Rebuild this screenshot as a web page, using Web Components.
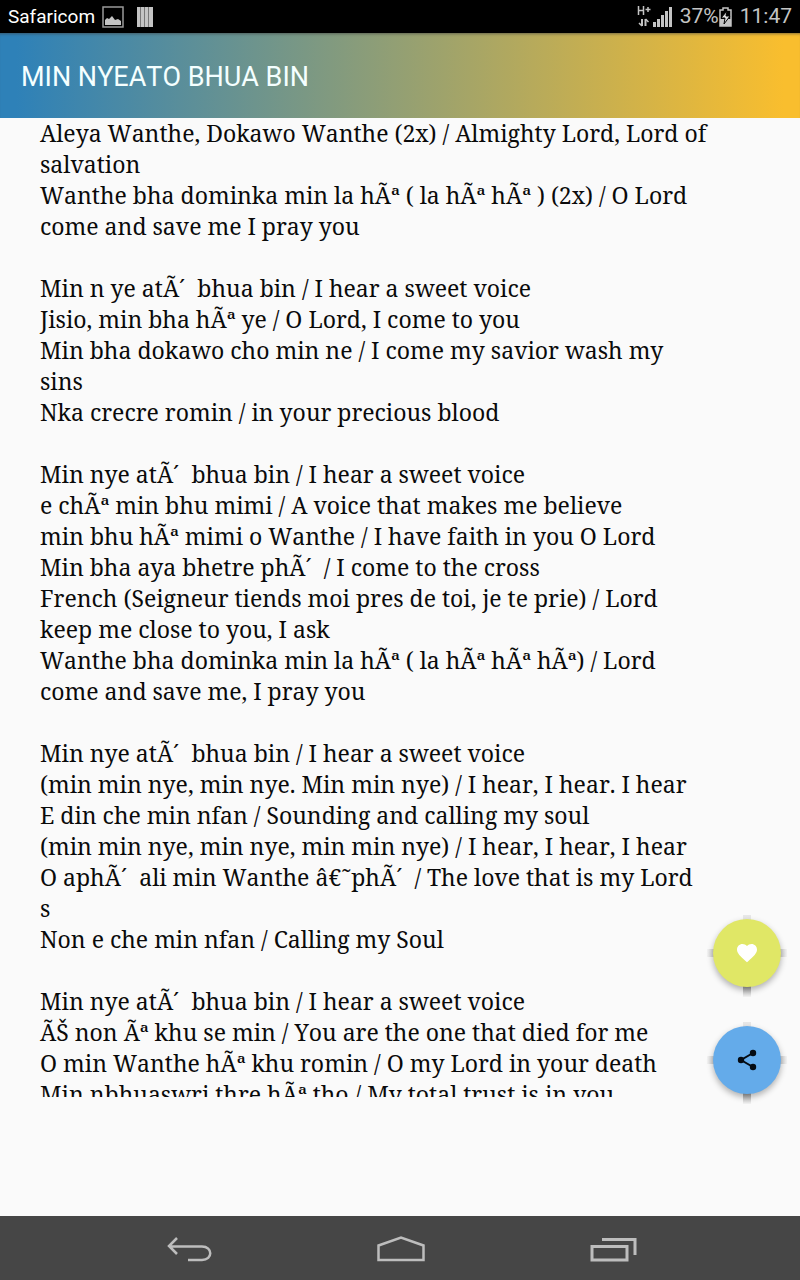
<!DOCTYPE html>
<html lang="en">
<head>
<meta charset="utf-8">
<meta name="viewport" content="width=device-width, initial-scale=1">
<title>Min Nyeato Bhua Bin</title>
<style>
    html, body {
        height: 100%;
        margin: 0;
    }
    body {
        font-family: Roboto, sans-serif;
        background: #fafafa;
        color: #0a0a0a;
    }
</style>
</head>
<body>
<song-page>
    <status-bar slot="status" carrier="Safaricom" battery="37%" time="11:47"></status-bar>
    <app-header slot="header">MIN NYEATO BHUA BIN</app-header>
    <song-lyrics slot="content">Aleya Wanthe, Dokawo Wanthe (2x) / Almighty Lord, Lord of salvation
Wanthe bha dominka min la hÃª ( la hÃª hÃª ) (2x) / O Lord come and save me I pray you

Min n ye atÃ´&nbsp; bhua bin / I hear a sweet voice
Jisio, min bha hÃª ye / O Lord, I come to you
Min bha dokawo cho min ne / I come my savior wash my sins
Nka crecre romin / in your precious blood

Min nye atÃ´&nbsp; bhua bin / I hear a sweet voice
e chÃª min bhu mimi / A voice that makes me believe
min bhu hÃª mimi o Wanthe / I have faith in you O Lord
Min bha aya bhetre phÃ´&nbsp; / I come to the cross
French (Seigneur tiends moi pres de toi, je te prie) / Lord keep me close to you, I ask
Wanthe bha dominka min la hÃª ( la hÃª hÃª hÃª) / Lord come and save me, I pray you

Min nye atÃ´&nbsp; bhua bin / I hear a sweet voice
(min min nye, min nye. Min min nye) / I hear, I hear. I hear
E din che min nfan / Sounding and calling my soul
(min min nye, min nye, min min nye) / I hear, I hear, I hear
O aphÃ´&nbsp; ali min Wanthe â€˜phÃ´&nbsp; / The love that is my Lord
s
Non e che min nfan / Calling my Soul

Min nye atÃ´&nbsp; bhua bin / I hear a sweet voice
ÃŠ non Ãª khu se min / You are the one that died for me
O min Wanthe hÃª khu romin / O my Lord in your death
Min nbhuaswri thre hÃª tho / My total trust is in you</song-lyrics>
    <round-button slot="actions" label="Favourite" style="--fill: #e0e766; --ink: #fff">
        <svg viewBox="0 0 24 24" width="24" height="24" fill="currentColor"><path d="M12 21.35l-1.45-1.32C5.4 15.36 2 12.28 2 8.5 2 5.42 4.42 3 7.5 3c1.74 0 3.41.81 4.5 2.09C13.09 3.81 14.76 3 16.5 3 19.58 3 22 5.42 22 8.5c0 3.78-3.4 6.86-8.55 11.54L12 21.35z"/></svg>
    </round-button>
    <round-button slot="actions" label="Share" style="--fill: #64abea; --ink: #050b12">
        <svg viewBox="0 0 24 24" width="24" height="24" fill="currentColor" stroke="currentColor"><path d="M18 5L6 12l12 7" fill="none" stroke-width="2"/><g stroke="none"><circle cx="18" cy="5" r="3.200"/><circle cx="6" cy="12" r="3.200"/><circle cx="18" cy="19" r="3.200"/></g></svg>
    </round-button>
    <nav-bar slot="nav"></nav-bar>
</song-page>

<script>
class SongPage extends HTMLElement {
    constructor() {
        super();
        this._shadowRoot = this.attachShadow({ mode: 'open' });
        this._shadowRoot.innerHTML = `
            <style>
                :host {
                    display: flex;
                    flex-direction: column;
                    height: 100vh;
                }
                main {
                    position: relative;
                    display: flex;
                    flex: 1;
                    min-height: 0;
                    padding-bottom: 119px;
                }
                .actions {
                    position: absolute;
                    right: 19px;
                    bottom: 122px;
                    display: flex;
                    flex-direction: column;
                    gap: 39px;
                }
            </style>
            <slot name="status"></slot>
            <slot name="header"></slot>
            <main>
                <slot name="content"></slot>
                <div class="actions"><slot name="actions"></slot></div>
            </main>
            <slot name="nav"></slot>
        `;
    }
}

class StatusBar extends HTMLElement {
    constructor() {
        super();
        this._shadowRoot = this.attachShadow({ mode: 'open' });
    }

    connectedCallback() {
        this._shadowRoot.innerHTML = `
            <style>
                :host {
                    display: flex;
                    justify-content: space-between;
                    flex: none;
                    height: 33px;
                    padding: 0 8px;
                    background: #000;
                    color: #c4c4c4;
                    font-size: 21px;
                    line-height: 33px;
                }
                div {
                    display: flex;
                    align-items: center;
                }
                .carrier {
                    margin-right: 7px;
                    color: #fff;
                    font-size: 19px;
                }
                .stripes { margin-left: 13px; }
                .signal { margin: 0 8px 0 2px; }
                .time { margin-left: 8px; }
                svg { flex: none; }
            </style>
            <div>
                <span class="carrier">${this.getAttribute('carrier')}</span>
                <svg width="22" height="22" viewBox="0 0 22 22"><path d="M1 1h20v20H1z" fill="none" stroke="#999" stroke-width="1.5"/><path d="M3 19v-5l2-2 2 1 3-3 3 4 3-1 3 2v4z" fill="#c4c4c4"/></svg>
                <svg class="stripes" width="16" height="20" viewBox="0 0 16 20"><path d="M0 0h16v20H0z" fill="#777"/><path d="M0 0h3v20H0zM4 0h3v20H4zM8 0h3v20H8zM12 0h4v20h-4z" fill="#c4c4c4"/></svg>
            </div>
            <div>
                <svg width="14" height="24" viewBox="0 0 14 24" fill="none" stroke="#c4c4c4"><path d="M1.500 1v9M6.500 1v9M1.500 5.500h5M8.500 4.500h5M11 2v5" stroke-width="1.500"/><path d="M5 21v-7M8.500 14v7" stroke-width="2"/><path d="M2 18l3 3M8.500 14l3 3" stroke-width="1.500"/></svg>
                <svg class="signal" width="19" height="20" viewBox="0 0 19 20" fill="#c4c4c4"><path d="M0 15h3v5H0zM4 12h3v8H4zM8 8h3v12H8zM12 4h3v16h-3zM16 0h3v20h-3z"/></svg>
                <span>${this.getAttribute('battery')}</span>
                <svg width="13" height="20" viewBox="0 0 13 20"><path d="M4 1h5v2h3v16H1V3h3z" fill="none" stroke="#c4c4c4" stroke-width="1.500"/><path d="M1 12h11v7H1z" fill="#c4c4c4"/><path d="M8 4L2 11h4l-1 6 6-8H7z" fill="#ddd" stroke="#000"/></svg>
                <span class="time">${this.getAttribute('time')}</span>
            </div>
        `;
    }
}

class AppHeader extends HTMLElement {
    constructor() {
        super();
        this._shadowRoot = this.attachShadow({ mode: 'open' });
        this._shadowRoot.innerHTML = `
            <style>
                :host {
                    display: flex;
                    align-items: center;
                    flex: none;
                    height: 85px;
                    padding: 2px 21px 0;
                    box-sizing: border-box;
                    background: linear-gradient(to right, #2e81b8 2%, #f9be2e 98%);
                    box-shadow: inset 0 3px 3px -2px rgba(60, 60, 60, .6);
                    color: #f4ffff;
                }
                h1 {
                    margin: 0;
                    font-size: 27px;
                    font-weight: 400;
                    line-height: 32px;
                    font-kerning: none;
                }
            </style>
            <h1><slot></slot></h1>
        `;
    }
}

class SongLyrics extends HTMLElement {
    constructor() {
        super();
        this._shadowRoot = this.attachShadow({ mode: 'open' });
        this._shadowRoot.innerHTML = `
            <style>
                :host {
                    display: block;
                    flex: 1;
                    overflow: hidden;
                    padding: 0 92px 0 40px;
                    font-family: "Noto Serif", "Droid Serif", "DejaVu Serif Condensed", "DejaVu Serif", serif;
                    font-size: 23px;
                    line-height: 31px;
                    font-kerning: none;
                }
                slot {
                    display: block;
                    white-space: pre-line;
                }
            </style>
            <slot></slot>
        `;
    }
}

class RoundButton extends HTMLElement {
    constructor() {
        super();
        this._shadowRoot = this.attachShadow({ mode: 'open' });
    }

    connectedCallback() {
        this._shadowRoot.innerHTML = `
            <style>
                :host {
                    display: block;
                    position: relative;
                    width: 68px;
                    height: 68px;
                }
                /* edges of the drop shadow that show past the circle */
                :host::before, :host::after {
                    content: "";
                    position: absolute;
                }
                :host::before {
                    left: 30px;
                    top: -4px;
                    width: 8px;
                    height: 82px;
                    background: linear-gradient(#e8e8e8, #ddd 50%, #999 86%, #f4f4f4);
                }
                :host::after {
                    left: -6px;
                    top: 30px;
                    width: 80px;
                    height: 8px;
                    background: linear-gradient(to right, #f4f4f4, #d0d0d0 8%, #d0d0d0 92%, #f4f4f4);
                }
                button {
                    position: relative;
                    z-index: 1;
                    display: flex;
                    align-items: center;
                    justify-content: center;
                    width: 100%;
                    height: 100%;
                    padding: 0;
                    border: 0;
                    border-radius: 50%;
                    background: var(--fill);
                    box-shadow: 0 3px 6px rgba(0, 0, 0, .3);
                    color: var(--ink);
                }
            </style>
            <button type="button" aria-label="${this.getAttribute('label')}"><slot></slot></button>
        `;
    }
}

class NavBar extends HTMLElement {
    constructor() {
        super();
        this._shadowRoot = this.attachShadow({ mode: 'open' });
        this._shadowRoot.innerHTML = `
            <style>
                :host {
                    display: flex;
                    justify-content: center;
                    flex: none;
                    height: 64px;
                    padding-left: 2px;
                    background: #464646;
                }
                button {
                    display: flex;
                    align-items: center;
                    justify-content: center;
                    width: 212px;
                    padding: 2px 0 0;
                    border: 0;
                    background: none;
                    color: #bdbdbd;
                }
                svg {
                    fill: none;
                    stroke: currentColor;
                    stroke-width: 3;
                }
            </style>
            <button type="button" aria-label="Back">
                <svg width="46" height="28" viewBox="0 0 46 28"><path d="M11 3L3 11l8 8M3 11.500h33c11 0 11 13.500 0 13.500H22" stroke-width="2.500"/></svg>
            </button>
            <button type="button" aria-label="Home">
                <svg width="50" height="28" viewBox="0 0 50 28"><path d="M2.500 10.500L25 2.500l22.500 8v14.500h-45z" stroke-width="2.500"/></svg>
            </button>
            <button type="button" aria-label="Recent apps">
                <svg width="48" height="28" viewBox="0 0 48 28"><path d="M3 11.500h35V25H3zM13 4.500h33V20"/></svg>
            </button>
        `;
    }
}

customElements.define('song-page', SongPage);
customElements.define('status-bar', StatusBar);
customElements.define('app-header', AppHeader);
customElements.define('song-lyrics', SongLyrics);
customElements.define('round-button', RoundButton);
customElements.define('nav-bar', NavBar);
</script>
</body>
</html>
